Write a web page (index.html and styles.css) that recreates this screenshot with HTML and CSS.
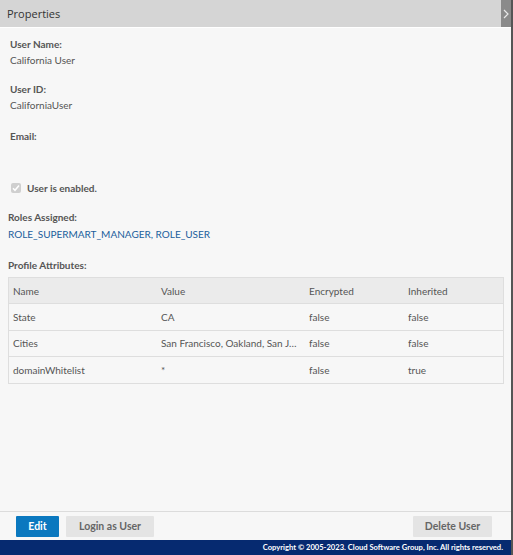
FILE: index.html
```html
<!DOCTYPE html>
<html lang="en">
<head>
<meta charset="utf-8">
<title>Properties</title>
<link rel="stylesheet" href="styles.css">
</head>
<body>
<div class="panel">
  <div class="panel-header">
    <span class="panel-title">Properties</span>
    <button class="collapse-btn" aria-label="Collapse">
      <svg width="6" height="10" viewBox="0 0 6 10"><polyline points="1,1 5,5 1,9" fill="none" stroke="#e8e8e8" stroke-width="1.2"/></svg>
    </button>
  </div>

  <div class="panel-body">
    <div class="field user-field">
      <div class="field-label">User Name:</div>
      <div class="field-value">California User</div>
    </div>
    <div class="field user-field">
      <div class="field-label">User ID:</div>
      <div class="field-value">CaliforniaUser</div>
    </div>
    <div class="field user-field email-field">
      <div class="field-label">Email:</div>
      <div class="field-value"></div>
    </div>

    <label class="enabled-row">
      <span class="checkbox">
        <svg width="8" height="8" viewBox="0 0 8 8"><polyline points="1,4.2 3,6.3 7,1.5" fill="none" stroke="#fff" stroke-width="1.5"/></svg>
      </span>
      <span class="enabled-text">User is enabled.</span>
    </label>

    <div class="field">
      <div class="field-label">Roles Assigned:</div>
      <div class="roles">ROLE_SUPERMART_MANAGER, ROLE_USER</div>
    </div>

    <div class="field attrs">
      <div class="field-label">Profile Attributes:</div>
      <table class="attr-table">
        <thead>
          <tr><th class="c-name">Name</th><th class="c-value">Value</th><th class="c-enc">Encrypted</th><th>Inherited</th></tr>
        </thead>
        <tbody>
          <tr><td>State</td><td>CA</td><td>false</td><td>false</td></tr>
          <tr><td>Cities</td><td class="ellipsis">San Francisco, Oakland, San Jose</td><td>false</td><td>false</td></tr>
          <tr><td>domainWhitelist</td><td>*</td><td>false</td><td>true</td></tr>
        </tbody>
      </table>
    </div>
  </div>

  <div class="panel-footer">
    <button class="btn btn-primary">Edit</button>
    <button class="btn btn-login">Login as User</button>
    <span class="spacer"></span>
    <button class="btn btn-delete">Delete User</button>
  </div>
  <div class="copyright">Copyright © 2005-2023. Cloud Software Group, Inc. All rights reserved.</div>
</div>
</body>
</html>
```
FILE: styles.css
```css
html, body {
  margin: 0;
  padding: 0;
  background: #f7f7f7;
}

body {
  font-family: "Lato", "Noto Sans", sans-serif;
  font-size: 10px;
  color: #555;
}

.panel {
  width: 511px;
  height: 555px;
  border-right: 2px solid #555;
  display: flex;
  flex-direction: column;
  background: #f7f7f7;
}

.panel-header {
  height: 27px;
  flex: none;
  display: flex;
  align-items: stretch;
  background: #d5d5d5;
  border-bottom: 1px solid #fff;
}

.panel-title {
  flex: 1;
  padding-left: 7px;
  line-height: 27px;
  font-family: "Open Sans", "Noto Sans", sans-serif;
  font-size: 11px;
  color: #333;
}

.collapse-btn {
  width: 10px;
  padding: 0;
  border: 0;
  background: #8a8a8a;
  display: flex;
  align-items: center;
  justify-content: center;
}

.panel-body {
  flex: 1;
  padding: 8px 0 0 8px;
}

.field {
  margin-bottom: 10px;
}

.user-field {
  padding-left: 2px;
  margin-bottom: 13px;
}

.email-field {
  margin-top: 15px;
}

.field-label {
  line-height: 16px;
  font-weight: bold;
  color: #555;
}

.field-value {
  line-height: 16px;
  min-height: 16px;
  color: #555;
}

.enabled-row {
  display: flex;
  align-items: center;
  gap: 6px;
  padding-left: 3px;
  margin: 20px 0 13px;
  line-height: 16px;
}

.checkbox {
  width: 10px;
  height: 10px;
  border-radius: 2px;
  background: #cfcfcf;
  display: flex;
  align-items: center;
  justify-content: center;
}

.enabled-text {
  font-weight: bold;
  color: #555;
}

.roles {
  line-height: 16px;
  color: #1a5e9c;
  margin-top: 1px;
}

.attrs {
  margin-top: 15px;
}

.attr-table {
  margin-top: 4px;
  width: 496px;
  border-collapse: collapse;
  table-layout: fixed;
  border: 1px solid #dedede;
}

.attr-table th,
.attr-table td {
  text-align: left;
  padding: 0 0 0 4px;
  font-weight: normal;
  color: #555;
  white-space: nowrap;
  overflow: hidden;
}

.attr-table th {
  height: 25px;
  background: #ebebeb;
}

.attr-table td {
  height: 25.5px;
  border-top: 1px solid #dedede;
}

.c-name { width: 144px; }
.c-value { width: 144px; }
.c-enc { width: 95px; }

.ellipsis {
  text-overflow: ellipsis;
  padding-right: 6px !important;
}

.panel-footer {
  flex: none;
  height: 28px;
  border-top: 1px solid #dcdcdc;
  display: flex;
  align-items: center;
  gap: 7px;
  padding: 0 19px 0 16px;
}

.spacer {
  flex: 1;
}

.btn {
  height: 21px;
  padding: 0;
  border: 0;
  border-radius: 1px;
  background: #e4e4e4;
  font-family: "Lato", "Noto Sans", sans-serif;
  font-size: 10.5px;
  font-weight: bold;
  color: #666;
}

.btn-primary {
  background: #0a78bf;
  color: #fff;
  width: 43px;
}

.btn-login {
  width: 88px;
}

.btn-delete {
  width: 79px;
}

.copyright {
  flex: none;
  height: 15px;
  line-height: 15px;
  background: #062a70;
  color: #fff;
  font-size: 7.6px;
  font-weight: bold;
  text-align: right;
  padding-right: 8px;
}
```
